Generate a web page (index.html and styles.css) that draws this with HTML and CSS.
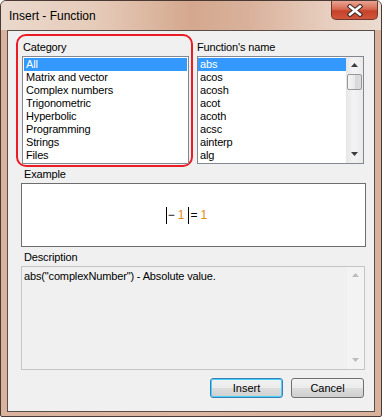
FILE: index.html
```html
<!DOCTYPE html>
<html lang="en">
<head>
  <meta charset="UTF-8" />
  <title>Insert - Function</title>
  <link rel="stylesheet" href="styles.css">
</head>
<body>
  <div class="window">
    <div class="titlebar">
      <span class="title">Insert - Function</span>
      <div class="close">
        <svg width="18" height="13" viewBox="0 0 18 13">
          <path d="M4 2.5 L14 10.5 M14 2.5 L4 10.5" stroke="#3a2a28" stroke-width="4.6" stroke-linecap="square"/>
          <path d="M4 2.5 L14 10.5 M14 2.5 L4 10.5" stroke="#ffffff" stroke-width="2.6" stroke-linecap="square"/>
        </svg>
      </div>
    </div>

    <div class="client">
      <div class="top">
        <div class="highlight">
          <div class="field category">
            <div class="label">Category</div>
            <ul class="listbox">
              <li class="selected">All</li>
              <li>Matrix and vector</li>
              <li>Complex numbers</li>
              <li>Trigonometric</li>
              <li>Hyperbolic</li>
              <li>Programming</li>
              <li>Strings</li>
              <li>Files</li>
            </ul>
          </div>
        </div>

        <div class="field functions">
          <div class="label">Function's name</div>
          <div class="listbox scrolled">
            <ul>
              <li class="selected">abs</li>
              <li>acos</li>
              <li>acosh</li>
              <li>acot</li>
              <li>acoth</li>
              <li>acsc</li>
              <li>ainterp</li>
              <li>alg</li>
            </ul>
            <div class="scrollbar">
              <svg class="arrow" width="7" height="4" viewBox="0 0 7 4"><path d="M0 4 L3.5 0 L7 4Z" fill="#3c3c3c"/></svg>
              <div class="thumb"></div>
              <div class="track"></div>
              <svg class="arrow" width="7" height="4" viewBox="0 0 7 4"><path d="M0 0 L3.5 4 L7 0Z" fill="#3c3c3c"/></svg>
            </div>
          </div>
        </div>
      </div>

      <div class="section">
        <div class="label">Example</div>
        <div class="example">
          <span class="abs"><span class="op">&minus;</span><span class="num">1</span></span>
          <span class="op">=</span><span class="num">1</span>
        </div>
      </div>

      <div class="section">
        <div class="label">Description</div>
        <div class="description">
          <div class="text">abs("complexNumber") - Absolute value.</div>
          <div class="scrollbar disabled">
            <svg class="arrow" width="7" height="4" viewBox="0 0 7 4"><path d="M0 4 L3.5 0 L7 4Z" fill="#bcbcbc"/></svg>
            <div class="track"></div>
            <svg class="arrow" width="7" height="4" viewBox="0 0 7 4"><path d="M0 0 L3.5 4 L7 0Z" fill="#bcbcbc"/></svg>
          </div>
        </div>
      </div>

      <div class="buttons">
        <button class="btn default">Insert</button>
        <button class="btn">Cancel</button>
      </div>
    </div>
  </div>
</body>
</html>
```

FILE: styles.css
```css
* { box-sizing: border-box; margin: 0; padding: 0; }

body {
  background: #ffffff;
  font-family: "Liberation Sans", Arial, sans-serif;
  font-size: 11px;
  letter-spacing: -0.15px;
  color: #000;
}

.window {
  width: 382px;
  height: 417px;
  border: 1px solid #4a3a33;
  border-radius: 6px 6px 2px 2px;
  background: linear-gradient(to right, #d9b39d, #dcb8a2 50%, #d8b29c);
  padding: 0 6px 4px 6px;
  display: flex;
  flex-direction: column;
  overflow: hidden;
}

.titlebar {
  height: 29px;
  margin: 0 -6px;
  padding-left: 8px;
  display: flex;
  justify-content: space-between;
  align-items: flex-start;
  background: linear-gradient(to right, #ead9cd 0%, #e6cbb9 25%, #d4a88e 50%, #d9b19b 65%, #e7cdbd 85%, #ebdbd0 100%);
}

.title {
  font-size: 12px;
  letter-spacing: 0;
  line-height: 30px;
  color: #000;
}

.close {
  width: 47px;
  height: 19px;
  margin-right: 3px;
  border: 1px solid #6e3a30;
  border-top: none;
  border-radius: 0 0 5px 5px;
  background: linear-gradient(to bottom, #e8a593 0%, #d76a52 45%, #c4432a 55%, #d2553b 100%);
  display: flex;
  align-items: center;
  justify-content: center;
}

.client {
  width: 368px;
  height: 382px;
  border: 1px solid #5a4d47;
  background: #f0f0f0;
  display: flex;
  flex-direction: column;
}

.label {
  height: 13px;
  line-height: 13px;
  padding-left: 1px;
}

.top {
  display: flex;
  align-items: flex-start;
  padding-top: 3px;
}

.highlight {
  width: 177px;
  height: 133px;
  margin-left: 8px;
  border: 2px solid #ec1c24;
  border-radius: 10px;
  padding: 5px 0 0 4px;
}

.field .label {
  margin-bottom: 2px;
}

.listbox {
  width: 167px;
  height: 108px;
  border: 1px solid #828790;
  background: #fff;
  list-style: none;
  padding: 1px;
}

.listbox li {
  height: 13px;
  line-height: 13px;
  padding-left: 2px;
  white-space: nowrap;
}

.listbox li.selected {
  background: #3399ff;
  color: #fff;
}

.functions {
  margin-left: 4px;
  padding-top: 7px;
}

.functions .label {
  margin-left: -1px;
}

.scrolled {
  display: flex;
  padding: 1px 0 0 0;
}

.scrolled ul {
  flex: 1;
  list-style: none;
}

.scrollbar {
  width: 17px;
  margin-top: -1px;
  height: 106px;
  display: flex;
  flex-direction: column;
  align-items: center;
  background: linear-gradient(to right, #e6e6e6, #f2f2f2 40%, #f0f0f0 70%, #e9e9e9);
}

.scrollbar .arrow {
  margin: 6px 0 7px;
  flex: none;
}

.scrollbar .thumb {
  width: 15px;
  height: 16px;
  border: 1px solid #979797;
  border-radius: 2px;
  background: linear-gradient(to right, #f6f6f6, #e9e9e9 50%, #d8d8d8 51%, #dcdcdc);
  flex: none;
}

.scrollbar .track {
  flex: 1;
}

.section {
  padding-left: 15px;
}

.section .label {
  margin-top: 1px;
  margin-bottom: 2px;
}

.section + .section .label {
  margin-top: 4px;
}

.example {
  width: 345px;
  height: 64px;
  margin-left: -2px;
  border: 1px solid #6d6d6d;
  background: #fff;
  display: flex;
  align-items: center;
  justify-content: center;
  padding-right: 14px;
  font-size: 12px;
  letter-spacing: 0;
}

.example .abs {
  display: inline-flex;
  align-items: center;
  height: 17px;
  border-left: 1px solid #000;
  border-right: 1px solid #000;
  padding: 0 3px 0 1px;
  margin-right: 2px;
}

.example .op {
  margin-right: 3px;
}

.example .num {
  color: #e6891c;
}

.description {
  width: 344px;
  height: 104px;
  margin-left: -2px;
  border: 1px solid #c5c5c5;
  background: #f0f0f0;
  display: flex;
}

.description .text {
  flex: 1;
  padding: 3px 0 0 2px;
  line-height: 13px;
}

.description .scrollbar {
  height: 102px;
  margin-top: 0;
  background: #f3f3f3;
}

.buttons {
  display: flex;
  justify-content: flex-end;
  gap: 8px;
  margin-top: 8px;
  padding-right: 10px;
}

.btn {
  width: 73px;
  height: 20px;
  font-family: "Liberation Sans", Arial, sans-serif;
  font-size: 11px;
  color: #000;
  border: 1px solid #707070;
  border-radius: 3px;
  background: linear-gradient(to bottom, #f2f2f2 0%, #ebebeb 50%, #dddddd 51%, #cfcfcf 100%);
}

.btn.default {
  border-color: #3c7fb1;
  box-shadow: inset 0 0 0 1px #48d2fb;
}
```
